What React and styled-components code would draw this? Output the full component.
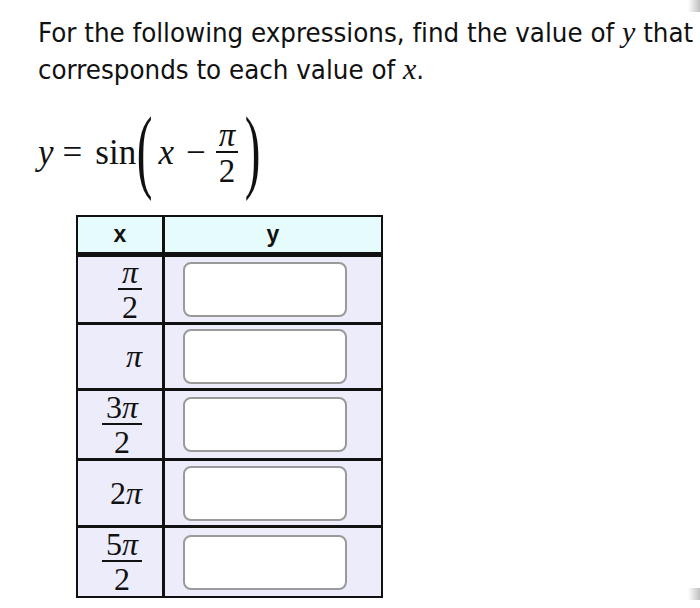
import React from 'react';
import styled, { createGlobalStyle } from 'styled-components';

const GlobalStyle = createGlobalStyle`
    body {
        margin: 0;
        background: #ffffff;
    }
`;

const SERIF = '"Liberation Serif", "Times New Roman", serif';

const Page = styled.div`
    box-sizing: border-box;
    width: 700px;
    height: 608px;
    padding: 14px 0 0 38px;
    position: relative;
    overflow: hidden;
`;

const Prompt = styled.p`
    margin: 0;
    font-family: "DejaVu Sans Condensed", "DejaVu Sans", sans-serif;
    font-size: 27.4px;
    line-height: 36px;
    font-variant-ligatures: none;
    white-space: nowrap;
    color: #111;
`;

const MathVar = styled.span`
    font-family: ${SERIF};
    font-style: italic;
    font-size: ${(props) => props.size || 26}px;
`;

const Equation = styled.div`
    display: flex;
    align-items: center;
    height: 90px;
    margin-top: 20px;
    font-family: ${SERIF};
    font-size: 35px;
    color: #111;
`;

const Op = styled.span`
    margin: 0 ${(props) => props.right || 0}px 0 ${(props) => props.left || 0}px;
`;

const Paren = styled.span`
    display: inline-block;
    font-family: ${SERIF};
    font-size: 94px;
    line-height: 1;
    transform: scaleX(0.5);
    margin: -8px ${(props) => props.right || 0}px 0 ${(props) => props.left || 0}px;
`;

const Frac = styled.span`
    display: inline-flex;
    flex-direction: column;
    align-items: center;
    padding: 0 ${(props) => props.pad || 0}px;
    font-family: ${SERIF};
    font-size: ${(props) => props.size || 27}px;
    & > span {
        line-height: ${(props) => props.lh || 26}px;
    }
    & > .bar {
        align-self: stretch;
        height: 2px;
        background: #111;
        margin: ${(props) => props.barGap || '3px 0 4px'};
        margin-left: -${(props) => props.pad || 0}px;
        margin-right: -${(props) => props.pad || 0}px;
    }
`;

const Table = styled.div`
    margin: 17px 0 0 38px;
    width: 307px;
    border: 2px solid #111;
    box-sizing: border-box;
`;

const HeadRow = styled.div`
    display: grid;
    grid-template-columns: 84px 1fr;
    height: 35px;
    background: #e6fcfc;
    border-bottom: 5px solid #111;
`;

const HeadCell = styled.div`
    display: flex;
    align-items: center;
    justify-content: center;
    font-family: "Liberation Sans", Arial, sans-serif;
    font-weight: bold;
    font-size: 23px;
    color: #111;
    & + & {
        border-left: 3px solid #111;
    }
`;

const Row = styled.div`
    box-sizing: border-box;
    display: grid;
    grid-template-columns: 84px 1fr;
    height: ${(props) => props.h}px;
    background: #ececfa;
    & + & {
        border-top: 3px solid #111;
    }
`;

const XCell = styled.div`
    display: flex;
    align-items: center;
    justify-content: flex-end;
    padding-right: 20px;
    font-family: ${SERIF};
    font-size: 32px;
    color: #111;
`;

const YCell = styled.div`
    display: flex;
    align-items: center;
    padding-left: 18px;
    border-left: 3px solid #111;
`;

const AnswerBox = styled.input`
    box-sizing: border-box;
    width: 164px;
    height: 55px;
    border: 2px solid #9a9a9a;
    border-radius: 8px;
    background: #fff;
    outline: none;
`;

const CornerShade = styled.div`
    position: absolute;
    right: 0;
    top: ${(props) => props.top}px;
    width: 12px;
    height: ${(props) => props.h}px;
    background: linear-gradient(to right, rgba(200, 200, 200, 0), rgba(185, 185, 185, 0.9));
`;

const rows = [
    { h: 65, num: 'π', den: '2' },
    { h: 66, value: 'π' },
    { h: 70, num: '3π', den: '2' },
    { h: 67, value: '2π' },
    { h: 71, num: '5π', den: '2' },
];

const PiTerm = ({ text }) => (
    <span>
        {text.length > 1 && text[0]}
        <MathVar size={32}>π</MathVar>
    </span>
);

const App = () => {
    return (
        <>
            <GlobalStyle />
            <Page>
                <CornerShade top={0} h={12} />
                <CornerShade top={588} h={12} />
                <Prompt>
                    For the following expressions, find the value of <MathVar size={30}>y</MathVar> that
                    <br />
                    corresponds to each value of <MathVar size={30}>x</MathVar>.
                </Prompt>
                <Equation>
                    <MathVar size={35}>y</MathVar>
                    <Op left={9} right={13}>=</Op>
                    <span>sin</span>
                    <Paren left={-7} right={-2}>(</Paren>
                    <MathVar size={35}>x</MathVar>
                    <Op left={12} right={10}>−</Op>
                    <Frac size={33} lh={28} pad={3} barGap="2px 0 4px">
                        <MathVar size={33}>π</MathVar>
                        <span className="bar"></span>
                        <span>2</span>
                    </Frac>
                    <Paren left={-1} right={-7}>)</Paren>
                </Equation>
                <Table>
                    <HeadRow>
                        <HeadCell>x</HeadCell>
                        <HeadCell>y</HeadCell>
                    </HeadRow>
                    {rows.map((r, i) => (
                        <Row key={i} h={r.h}>
                            <XCell>
                                {r.value ? (
                                    <PiTerm text={r.value} />
                                ) : (
                                    <Frac size={32} lh={27} pad={4} barGap="2px 0 4px">
                                        <PiTerm text={r.num} />
                                        <span className="bar"></span>
                                        <span>{r.den}</span>
                                    </Frac>
                                )}
                            </XCell>
                            <YCell>
                                <AnswerBox type="text" />
                            </YCell>
                        </Row>
                    ))}
                </Table>
            </Page>
        </>
    );
};

export default App;
